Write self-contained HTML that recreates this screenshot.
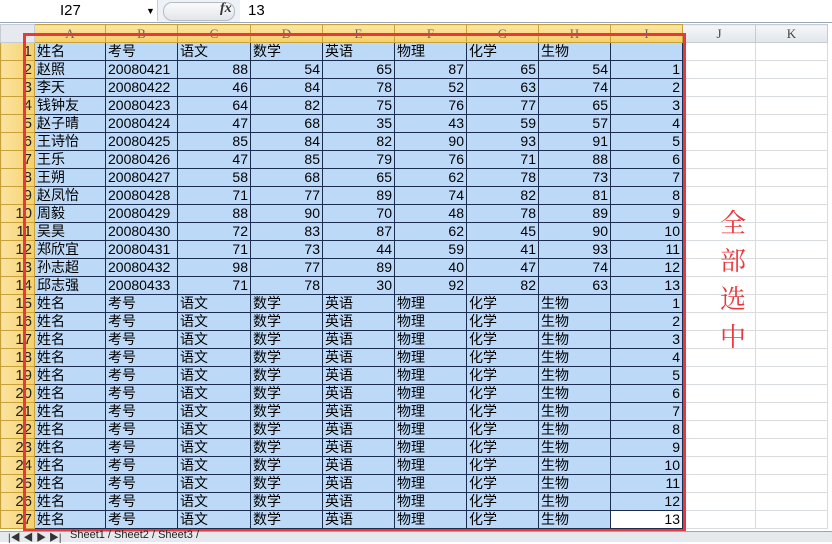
<!DOCTYPE html>
<html><head><meta charset="utf-8"><style>
body{margin:0;width:832px;height:541px;overflow:hidden;background:#fff;position:relative;font-family:"Liberation Sans","Noto Sans CJK SC",sans-serif}
#fb{position:absolute;left:0;top:0;width:832px;height:22px;background:#fff;border-bottom:1px solid #9ba7b7}
#nb{position:absolute;left:0;top:0;width:157px;height:21px;border-right:1px solid #c5cdd8;font-size:15px;line-height:22px}
#gap{position:absolute;left:158px;top:0;width:82px;height:22px;background:#eef1f5}
#pill{position:absolute;left:5px;top:2px;width:70px;height:17px;border:1px solid #b4bcc6;border-radius:9px;background:linear-gradient(#fafafa,#e3e6ea)}
table{position:absolute;left:0;top:24px;border-collapse:collapse;table-layout:fixed}
td{height:17px;padding:0 2px;font-size:14px;line-height:17px;white-space:nowrap;overflow:hidden;border:1px solid #1b2c4e;background:#bcd9f7;color:#000}
td.r{text-align:right}
tr.h td{background:linear-gradient(#fbe7a4,#f6cf64);border:1px solid #c8a13b;color:#666;text-align:center;font-family:"Liberation Serif",serif;font-size:13px}
td.rh{background:linear-gradient(90deg,#fbe3a0,#f6d06c);border:1px solid #c8a13b;text-align:right;color:#222;font-size:15px;padding:0 2px 0 0}
td.e{background:#fff;border:1px solid #d9dcdf}
tr.h td.eh{background:linear-gradient(#f4f6f8,#e2e6eb);border:1px solid #c5cbd2;color:#444}
tr.h td.c{background:#e6e9ee;border:1px solid #c5cbd2}
td.w{background:#fff}
#red{position:absolute;left:23px;top:33px;width:657px;height:493px;border:3px solid #e8383d}
#txt{position:absolute;left:716px;top:203px;width:34px;font-family:"Noto Serif CJK SC",serif;font-size:26px;line-height:38px;color:#e8383d;text-align:center}
#tabs{position:absolute;left:0;top:531px;width:832px;height:10px;background:#e5e9ee;border-top:1px solid #9ba7b7}
</style></head><body>
<div id="fb"><div id="nb"><span style="position:absolute;left:60px">I27</span><span style="position:absolute;left:146px;top:0;font-size:9px">▼</span></div><div id="gap"><div id="pill"></div><span style="position:absolute;left:62px;top:1px;font-family:'Liberation Serif',serif;font-style:italic;font-weight:bold;font-size:14px;color:#333">fx</span></div><span style="position:absolute;left:248px;top:2px;font-size:15px">13</span></div>
<table>
<colgroup><col style="width:34px"><col style="width:71px"><col style="width:72px"><col style="width:73px"><col style="width:72px"><col style="width:72px"><col style="width:72px"><col style="width:72px"><col style="width:72px"><col style="width:72px"><col style="width:73px"><col style="width:72px"></colgroup>
<tr class="h"><td class="c"></td><td>A</td><td>B</td><td>C</td><td>D</td><td>E</td><td>F</td><td>G</td><td>H</td><td>I</td><td class="eh">J</td><td class="eh">K</td></tr>
<tr><td class="rh">1</td><td>姓名</td><td>考号</td><td>语文</td><td>数学</td><td>英语</td><td>物理</td><td>化学</td><td>生物</td><td></td><td class="e"></td><td class="e"></td></tr>
<tr><td class="rh">2</td><td>赵照</td><td>20080421</td><td class="r">88</td><td class="r">54</td><td class="r">65</td><td class="r">87</td><td class="r">65</td><td class="r">54</td><td class="r">1</td><td class="e"></td><td class="e"></td></tr>
<tr><td class="rh">3</td><td>李天</td><td>20080422</td><td class="r">46</td><td class="r">84</td><td class="r">78</td><td class="r">52</td><td class="r">63</td><td class="r">74</td><td class="r">2</td><td class="e"></td><td class="e"></td></tr>
<tr><td class="rh">4</td><td>钱钟友</td><td>20080423</td><td class="r">64</td><td class="r">82</td><td class="r">75</td><td class="r">76</td><td class="r">77</td><td class="r">65</td><td class="r">3</td><td class="e"></td><td class="e"></td></tr>
<tr><td class="rh">5</td><td>赵子晴</td><td>20080424</td><td class="r">47</td><td class="r">68</td><td class="r">35</td><td class="r">43</td><td class="r">59</td><td class="r">57</td><td class="r">4</td><td class="e"></td><td class="e"></td></tr>
<tr><td class="rh">6</td><td>王诗怡</td><td>20080425</td><td class="r">85</td><td class="r">84</td><td class="r">82</td><td class="r">90</td><td class="r">93</td><td class="r">91</td><td class="r">5</td><td class="e"></td><td class="e"></td></tr>
<tr><td class="rh">7</td><td>王乐</td><td>20080426</td><td class="r">47</td><td class="r">85</td><td class="r">79</td><td class="r">76</td><td class="r">71</td><td class="r">88</td><td class="r">6</td><td class="e"></td><td class="e"></td></tr>
<tr><td class="rh">8</td><td>王朔</td><td>20080427</td><td class="r">58</td><td class="r">68</td><td class="r">65</td><td class="r">62</td><td class="r">78</td><td class="r">73</td><td class="r">7</td><td class="e"></td><td class="e"></td></tr>
<tr><td class="rh">9</td><td>赵凤怡</td><td>20080428</td><td class="r">71</td><td class="r">77</td><td class="r">89</td><td class="r">74</td><td class="r">82</td><td class="r">81</td><td class="r">8</td><td class="e"></td><td class="e"></td></tr>
<tr><td class="rh">10</td><td>周毅</td><td>20080429</td><td class="r">88</td><td class="r">90</td><td class="r">70</td><td class="r">48</td><td class="r">78</td><td class="r">89</td><td class="r">9</td><td class="e"></td><td class="e"></td></tr>
<tr><td class="rh">11</td><td>吴昊</td><td>20080430</td><td class="r">72</td><td class="r">83</td><td class="r">87</td><td class="r">62</td><td class="r">45</td><td class="r">90</td><td class="r">10</td><td class="e"></td><td class="e"></td></tr>
<tr><td class="rh">12</td><td>郑欣宜</td><td>20080431</td><td class="r">71</td><td class="r">73</td><td class="r">44</td><td class="r">59</td><td class="r">41</td><td class="r">93</td><td class="r">11</td><td class="e"></td><td class="e"></td></tr>
<tr><td class="rh">13</td><td>孙志超</td><td>20080432</td><td class="r">98</td><td class="r">77</td><td class="r">89</td><td class="r">40</td><td class="r">47</td><td class="r">74</td><td class="r">12</td><td class="e"></td><td class="e"></td></tr>
<tr><td class="rh">14</td><td>邱志强</td><td>20080433</td><td class="r">71</td><td class="r">78</td><td class="r">30</td><td class="r">92</td><td class="r">82</td><td class="r">63</td><td class="r">13</td><td class="e"></td><td class="e"></td></tr>
<tr><td class="rh">15</td><td>姓名</td><td>考号</td><td>语文</td><td>数学</td><td>英语</td><td>物理</td><td>化学</td><td>生物</td><td class="r">1</td><td class="e"></td><td class="e"></td></tr>
<tr><td class="rh">16</td><td>姓名</td><td>考号</td><td>语文</td><td>数学</td><td>英语</td><td>物理</td><td>化学</td><td>生物</td><td class="r">2</td><td class="e"></td><td class="e"></td></tr>
<tr><td class="rh">17</td><td>姓名</td><td>考号</td><td>语文</td><td>数学</td><td>英语</td><td>物理</td><td>化学</td><td>生物</td><td class="r">3</td><td class="e"></td><td class="e"></td></tr>
<tr><td class="rh">18</td><td>姓名</td><td>考号</td><td>语文</td><td>数学</td><td>英语</td><td>物理</td><td>化学</td><td>生物</td><td class="r">4</td><td class="e"></td><td class="e"></td></tr>
<tr><td class="rh">19</td><td>姓名</td><td>考号</td><td>语文</td><td>数学</td><td>英语</td><td>物理</td><td>化学</td><td>生物</td><td class="r">5</td><td class="e"></td><td class="e"></td></tr>
<tr><td class="rh">20</td><td>姓名</td><td>考号</td><td>语文</td><td>数学</td><td>英语</td><td>物理</td><td>化学</td><td>生物</td><td class="r">6</td><td class="e"></td><td class="e"></td></tr>
<tr><td class="rh">21</td><td>姓名</td><td>考号</td><td>语文</td><td>数学</td><td>英语</td><td>物理</td><td>化学</td><td>生物</td><td class="r">7</td><td class="e"></td><td class="e"></td></tr>
<tr><td class="rh">22</td><td>姓名</td><td>考号</td><td>语文</td><td>数学</td><td>英语</td><td>物理</td><td>化学</td><td>生物</td><td class="r">8</td><td class="e"></td><td class="e"></td></tr>
<tr><td class="rh">23</td><td>姓名</td><td>考号</td><td>语文</td><td>数学</td><td>英语</td><td>物理</td><td>化学</td><td>生物</td><td class="r">9</td><td class="e"></td><td class="e"></td></tr>
<tr><td class="rh">24</td><td>姓名</td><td>考号</td><td>语文</td><td>数学</td><td>英语</td><td>物理</td><td>化学</td><td>生物</td><td class="r">10</td><td class="e"></td><td class="e"></td></tr>
<tr><td class="rh">25</td><td>姓名</td><td>考号</td><td>语文</td><td>数学</td><td>英语</td><td>物理</td><td>化学</td><td>生物</td><td class="r">11</td><td class="e"></td><td class="e"></td></tr>
<tr><td class="rh">26</td><td>姓名</td><td>考号</td><td>语文</td><td>数学</td><td>英语</td><td>物理</td><td>化学</td><td>生物</td><td class="r">12</td><td class="e"></td><td class="e"></td></tr>
<tr><td class="rh">27</td><td>姓名</td><td>考号</td><td>语文</td><td>数学</td><td>英语</td><td>物理</td><td>化学</td><td>生物</td><td class="r w">13</td><td class="e"></td><td class="e"></td></tr>
</table>
<div id="red"></div>
<div id="txt">全<br>部<br>选<br>中</div>
<div id="tabs"><span style="position:absolute;left:8px;top:-3px;font-size:10px;color:#333">|◀ ◀ ▶ ▶|</span><span style="position:absolute;left:70px;top:-3px;font-size:11px;color:#222">Sheet1 / Sheet2 / Sheet3 /</span></div>
</body></html>
